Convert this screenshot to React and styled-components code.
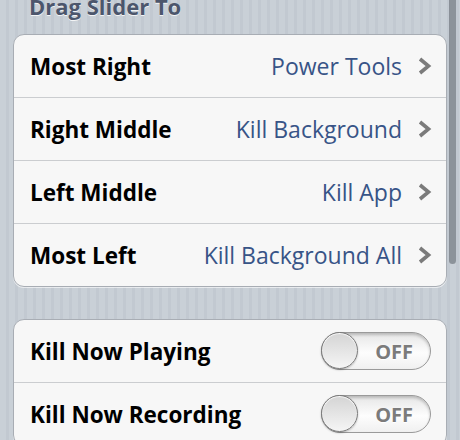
import { createGlobalStyle, styled } from "styled-components"

const GlobalStyle = createGlobalStyle`
  html, body {
    margin: 0;
    padding: 0;
    overflow: hidden;
  }
  body {
    font-family: "Open Sans", "Liberation Sans", sans-serif;
  }
`

const Screen = styled.div`
  position: relative;
  width: 460px;
  height: 440px;
  overflow: hidden;
  background-color: #c8cfd6;
  background-image: repeating-linear-gradient(
    90deg,
    #c9d0d7 0px,
    #c9d0d7 6px,
    #c2c9d1 6px,
    #c2c9d1 9px
  );
`

const Content = styled.div`
  display: flex;
  flex-direction: column;
  padding: 0 13px;
  width: 434px;
  margin-top: -11px;
`

const SectionHeader = styled.div`
  font-size: 22px;
  font-weight: 700;
  line-height: 34px;
  height: 34px;
  margin-bottom: 11px;
  padding-left: 16px;
  color: #4c566c;
  text-shadow: 0 1px 0 rgba(255, 255, 255, 0.8);
`

const Group = styled.div`
  display: flex;
  flex-direction: column;
  background: #f7f7f7;
  border: 1px solid #a8adb4;
  border-radius: 11px;
  box-shadow: 0 1px 0 rgba(255, 255, 255, 0.6);
  margin-bottom: ${({ $gap }) => $gap || 0}px;
  overflow: hidden;
`

const Row = styled.div`
  display: flex;
  align-items: center;
  height: 62px;
  padding: 0 14px 0 16px;
  border-top: ${({ $first }) => ($first ? "none" : "1px solid #cbcdd0")};
`

const Label = styled.div`
  flex: 1;
  font-size: 22.5px;
  font-weight: 700;
  color: #000;
  white-space: nowrap;
`

const Detail = styled.div`
  font-size: 23px;
  color: #385487;
  white-space: nowrap;
  margin-right: 15px;
`

const Chevron = () => (
  <svg width="15" height="18" viewBox="0 0 15 18">
    <path
      d="M3 2 L11.5 9 L3 16"
      fill="none"
      stroke="#7b7b7b"
      strokeWidth="3.6"
      strokeLinejoin="miter"
    />
  </svg>
)

const Switch = styled.div`
  position: relative;
  display: flex;
  align-items: center;
  justify-content: flex-end;
  width: 108px;
  height: 36px;
  margin-right: 1px;
  border: 1px solid #9a9a9a;
  border-radius: 19px;
  background: linear-gradient(#e6e6e6, #fdfdfd 55%, #f0f0f0);
  box-shadow: inset 0 2px 3px rgba(0, 0, 0, 0.2);
`

const Knob = styled.div`
  position: absolute;
  left: -1px;
  top: -1px;
  width: 35px;
  height: 35px;
  border: 1.5px solid #7a7a7a;
  border-radius: 50%;
  background: linear-gradient(#d4d4d4, #f5f5f5);
  box-shadow: inset 0 1px 1px rgba(255, 255, 255, 0.9), 0 1px 2px rgba(0, 0, 0, 0.25);
`

const SwitchText = styled.span`
  font-size: 20px;
  font-weight: 700;
  color: #7b7b7b;
  margin-right: 17px;
  text-shadow: 0 1px 0 #fff;
`

const ScrollIndicator = styled.div`
  position: absolute;
  right: 4px;
  top: -10px;
  width: 7px;
  height: 274px;
  border-radius: 4px;
  background: rgba(80, 86, 94, 0.5);
`

const sliderRows = [
  { label: "Most Right", value: "Power Tools" },
  { label: "Right Middle", value: "Kill Background" },
  { label: "Left Middle", value: "Kill App" },
  { label: "Most Left", value: "Kill Background All" },
]

const toggleRows = ["Kill Now Playing", "Kill Now Recording"]

const Toggle = () => (
  <Switch>
    <Knob />
    <SwitchText>OFF</SwitchText>
  </Switch>
)

const App = () => (
  <Screen>
    <GlobalStyle />
    <Content>
      <SectionHeader>Drag Slider To</SectionHeader>
      <Group $gap={32}>
        {sliderRows.map((row, i) => (
          <Row key={row.label} $first={i === 0}>
            <Label>{row.label}</Label>
            <Detail>{row.value}</Detail>
            <Chevron />
          </Row>
        ))}
      </Group>
      <Group>
        {toggleRows.map((label, i) => (
          <Row key={label} $first={i === 0}>
            <Label>{label}</Label>
            <Toggle />
          </Row>
        ))}
      </Group>
    </Content>
    <ScrollIndicator />
  </Screen>
)

export default App
